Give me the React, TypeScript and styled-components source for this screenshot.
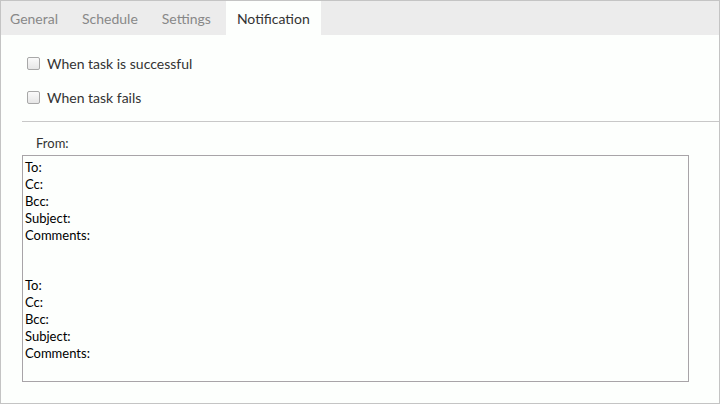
import styled, { createGlobalStyle } from 'styled-components'

const Global = createGlobalStyle`
  html, body { margin: 0; padding: 0; background: #fff; }
  body { font-family: Lato, "Liberation Sans", sans-serif; }
`

const Frame = styled.div`
  width: 718px;
  height: 402px;
  border: 1px solid #c4c4c4;
  background: #fdfffd;
  display: flex;
  flex-direction: column;
`

const TabBar = styled.div`
  display: flex;
  height: 34px;
  background: #ececec;
`

const Tab = styled.div<{ $active?: boolean }>`
  padding: 0 11px 0 ${p => (p.$active ? '11px' : '9px')};
  display: flex;
  align-items: center;
  font-size: 14px;
  color: ${p => (p.$active ? '#333' : '#888')};
  background: ${p => (p.$active ? '#fdfffd' : 'transparent')};
  margin-right: ${p => (p.$active ? '0' : '4px')};
`

const Body = styled.div`
  padding: 17px 0 0 21px;
  display: flex;
  flex-direction: column;
`

const Check = styled.label`
  display: flex;
  align-items: center;
  gap: 7px;
  height: 22px;
  margin: 0 0 12px 5px;
  font-size: 14px;
  color: #333;
`

const Box = styled.span`
  width: 11px;
  height: 11px;
  border: 1px solid #a8a8a8;
  border-radius: 2px;
  background: linear-gradient(#fafafa, #e6e6e6);
`

const Rule = styled.div`
  height: 1px;
  background: #c8c8c8;
  margin-top: 1px;
`

const FromLabel = styled.div`
  font-size: 13px;
  color: #333;
  padding: 13px 0 4px 14px;
`

const Mail = styled.div`
  width: 663px;
  height: 222px;
  border: 1px solid #a8a4a8;
  padding: 3px 0 0 2px;
  box-sizing: content-box;
  font-size: 13px;
  color: #000;
  line-height: 17px;
`

const Group = styled.div`
  margin-bottom: 33px;
`

const fields = ['To:', 'Cc:', 'Bcc:', 'Subject:', 'Comments:']

export default function App() {
  return (
    <>
      <Global />
      <Frame>
        <TabBar>
          <Tab>General</Tab>
          <Tab>Schedule</Tab>
          <Tab>Settings</Tab>
          <Tab $active>Notification</Tab>
        </TabBar>
        <Body>
          <Check><Box />When task is successful</Check>
          <Check><Box />When task fails</Check>
          <Rule />
          <FromLabel>From:</FromLabel>
          <Mail>
            {[0, 1].map(g => (
              <Group key={g}>
                {fields.map(f => <div key={f}>{f}</div>)}
              </Group>
            ))}
          </Mail>
        </Body>
      </Frame>
    </>
  )
}
